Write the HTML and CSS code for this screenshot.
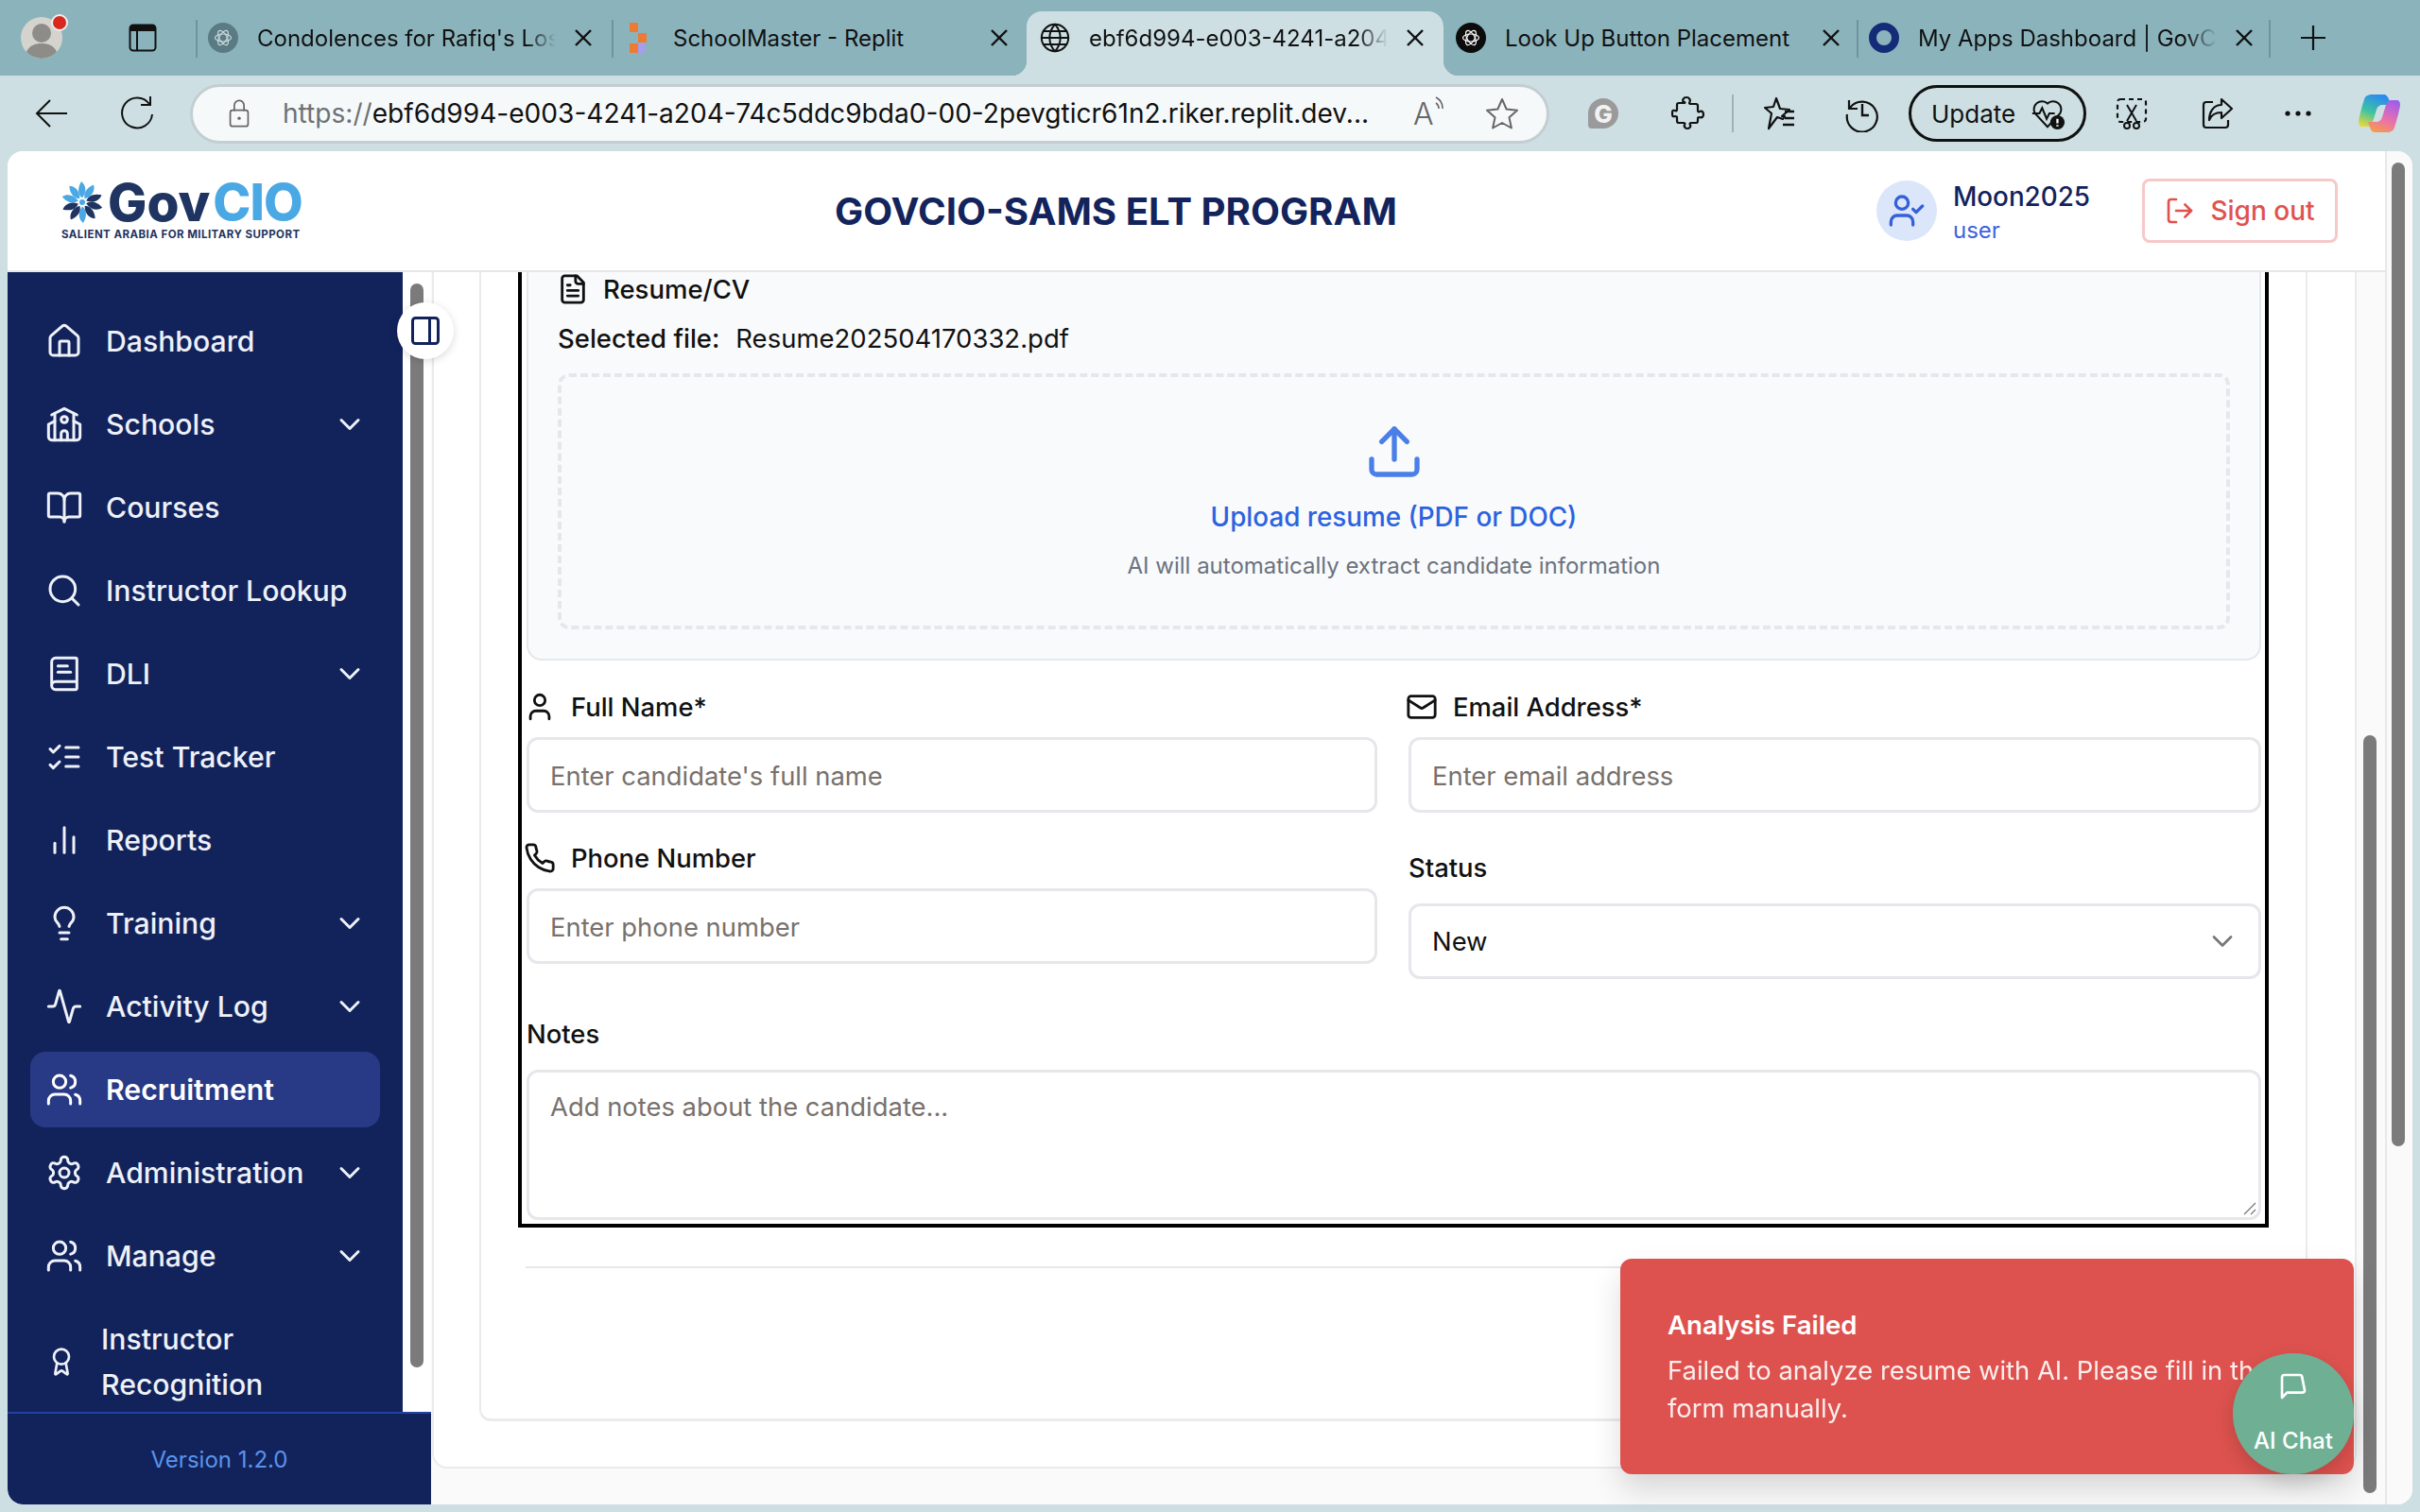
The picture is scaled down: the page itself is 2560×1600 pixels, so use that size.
FILE: index.html
```html
<!DOCTYPE html>
<html lang="en">
<head>
<meta charset="UTF-8" />
<title>GovCIO-SAMS ELT Program</title>
<link rel="stylesheet" href="styles.css">
</head>
<body>

<svg class="sprite" xmlns="http://www.w3.org/2000/svg">
  <symbol id="i-home" viewBox="0 0 24 24"><path d="M15 21v-8a1 1 0 0 0-1-1h-4a1 1 0 0 0-1 1v8"/><path d="M3 10a2 2 0 0 1 .709-1.528l7-5.999a2 2 0 0 1 2.582 0l7 5.999A2 2 0 0 1 21 10v9a2 2 0 0 1-2 2H5a2 2 0 0 1-2-2z"/></symbol>
  <symbol id="i-school" viewBox="0 0 24 24"><path d="M14 22v-4a2 2 0 1 0-4 0v4"/><path d="m18 10 4 2v8a2 2 0 0 1-2 2H4a2 2 0 0 1-2-2v-8l4-2"/><path d="M18 5v17"/><path d="m4 6 8-4 8 4"/><path d="M6 5v17"/><circle cx="12" cy="9" r="2"/></symbol>
  <symbol id="i-book-open" viewBox="0 0 24 24"><path d="M12 7v14"/><path d="M3 18a1 1 0 0 1-1-1V4a1 1 0 0 1 1-1h5a4 4 0 0 1 4 4 4 4 0 0 1 4-4h5a1 1 0 0 1 1 1v13a1 1 0 0 1-1 1h-6a3 3 0 0 0-3 3 3 3 0 0 0-3-3z"/></symbol>
  <symbol id="i-search" viewBox="0 0 24 24"><circle cx="11" cy="11" r="8"/><path d="m21 21-4.3-4.3"/></symbol>
  <symbol id="i-book" viewBox="0 0 24 24"><path d="M4 19.5v-15A2.5 2.5 0 0 1 6.5 2H19a1 1 0 0 1 1 1v18a1 1 0 0 1-1 1H6.5a1 1 0 0 1 0-5H20"/><path d="M8 11h8"/><path d="M8 7h6"/></symbol>
  <symbol id="i-checks" viewBox="0 0 24 24"><path d="m3 17 2 2 4-4"/><path d="m3 7 2 2 4-4"/><path d="M13 6h8"/><path d="M13 12h8"/><path d="M13 18h8"/></symbol>
  <symbol id="i-bars" viewBox="0 0 24 24"><path d="M18 20V10"/><path d="M12 20V4"/><path d="M6 20v-6"/></symbol>
  <symbol id="i-bulb" viewBox="0 0 24 24"><path d="M15 14c.2-1 .7-1.7 1.5-2.5 1-.9 1.5-2.2 1.5-3.5A6 6 0 0 0 6 8c0 1 .2 2.2 1.5 3.5.7.7 1.3 1.5 1.5 2.5"/><path d="M9 18h6"/><path d="M10 22h4"/></symbol>
  <symbol id="i-activity" viewBox="0 0 24 24"><path d="M22 12h-2.48a2 2 0 0 0-1.93 1.46l-2.35 8.36a.25.25 0 0 1-.48 0L9.24 2.18a.25.25 0 0 0-.48 0l-2.35 8.36A2 2 0 0 1 4.49 12H2"/></symbol>
  <symbol id="i-users" viewBox="0 0 24 24"><path d="M16 21v-2a4 4 0 0 0-4-4H6a4 4 0 0 0-4 4v2"/><circle cx="9" cy="7" r="4"/><path d="M22 21v-2a4 4 0 0 0-3-3.87"/><path d="M16 3.13a4 4 0 0 1 0 7.75"/></symbol>
  <symbol id="i-settings" viewBox="0 0 24 24"><path d="M12.22 2h-.44a2 2 0 0 0-2 2v.18a2 2 0 0 1-1 1.73l-.43.25a2 2 0 0 1-2 0l-.15-.08a2 2 0 0 0-2.73.73l-.22.38a2 2 0 0 0 .73 2.73l.15.1a2 2 0 0 1 1 1.72v.51a2 2 0 0 1-1 1.74l-.15.09a2 2 0 0 0-.73 2.73l.22.38a2 2 0 0 0 2.73.73l.15-.08a2 2 0 0 1 2 0l.43.25a2 2 0 0 1 1 1.73V20a2 2 0 0 0 2 2h.44a2 2 0 0 0 2-2v-.18a2 2 0 0 1 1-1.73l.43-.25a2 2 0 0 1 2 0l.15.08a2 2 0 0 0 2.73-.73l.22-.39a2 2 0 0 0-.73-2.73l-.15-.08a2 2 0 0 1-1-1.74v-.5a2 2 0 0 1 1-1.74l.15-.09a2 2 0 0 0 .73-2.73l-.22-.38a2 2 0 0 0-2.73-.73l-.15.08a2 2 0 0 1-2 0l-.43-.25a2 2 0 0 1-1-1.73V4a2 2 0 0 0-2-2z"/><circle cx="12" cy="12" r="3"/></symbol>
  <symbol id="i-award" viewBox="0 0 24 24"><path d="m15.477 12.89 1.515 8.526a.5.5 0 0 1-.81.47l-3.58-2.687a1 1 0 0 0-1.197 0l-3.586 2.686a.5.5 0 0 1-.81-.469l1.514-8.526"/><circle cx="12" cy="8" r="6"/></symbol>
  <symbol id="i-chevron" viewBox="0 0 24 24"><path d="m6 9 6 6 6-6"/></symbol>
  <symbol id="i-file" viewBox="0 0 24 24"><path d="M15 2H6a2 2 0 0 0-2 2v16a2 2 0 0 0 2 2h12a2 2 0 0 0 2-2V7Z"/><path d="M14 2v4a2 2 0 0 0 2 2h4"/><path d="M10 9H8"/><path d="M16 13H8"/><path d="M16 17H8"/></symbol>
  <symbol id="i-upload" viewBox="0 0 24 24"><path d="M21 15v4a2 2 0 0 1-2 2H5a2 2 0 0 1-2-2v-4"/><path d="M17 8l-5-5-5 5"/><path d="M12 3v12"/></symbol>
  <symbol id="i-user" viewBox="0 0 24 24"><path d="M19 21v-2a4 4 0 0 0-4-4H9a4 4 0 0 0-4 4v2"/><circle cx="12" cy="7" r="4"/></symbol>
  <symbol id="i-mail" viewBox="0 0 24 24"><rect x="2" y="4" width="20" height="16" rx="2"/><path d="m22 7-8.97 5.7a1.94 1.94 0 0 1-2.06 0L2 7"/></symbol>
  <symbol id="i-phone" viewBox="0 0 24 24"><path d="M22 16.92v3a2 2 0 0 1-2.18 2 19.79 19.79 0 0 1-8.63-3.07 19.5 19.5 0 0 1-6-6 19.79 19.79 0 0 1-3.07-8.67A2 2 0 0 1 4.11 2h3a2 2 0 0 1 2 1.72 12.84 12.84 0 0 0 .7 2.81 2 2 0 0 1-.45 2.11L8.09 9.91a16 16 0 0 0 6 6l1.27-1.27a2 2 0 0 1 2.11-.45 12.84 12.84 0 0 0 2.81.7A2 2 0 0 1 22 16.92z"/></symbol>
  <symbol id="i-user-check" viewBox="0 0 24 24"><path d="M16 21v-2a4 4 0 0 0-4-4H6a4 4 0 0 0-4 4v2"/><circle cx="9" cy="7" r="4"/><path d="M16 11l2 2 4-4"/></symbol>
  <symbol id="i-logout" viewBox="0 0 24 24"><path d="M9 21H5a2 2 0 0 1-2-2V5a2 2 0 0 1 2-2h4"/><path d="M16 17l5-5-5-5"/><path d="M21 12H9"/></symbol>
  <symbol id="i-message" viewBox="0 0 24 24"><path d="M21 15a2 2 0 0 1-2 2H7l-4 4V5a2 2 0 0 1 2-2h12a2 2 0 0 1 2 2z"/></symbol>
  <symbol id="i-panel" viewBox="0 0 24 24"><rect x="3" y="3" width="18" height="18" rx="2"/><path d="M15 3v18"/></symbol>
  <symbol id="i-globe" viewBox="0 0 24 24"><circle cx="12" cy="12" r="10"/><path d="M12 2a14.5 14.5 0 0 0 0 20 14.5 14.5 0 0 0 0-20"/><path d="M2 12h20"/><path d="M3.5 7h17"/><path d="M3.5 17h17"/></symbol>
  <symbol id="i-close" viewBox="0 0 24 24"><path d="M4 4l16 16"/><path d="M20 4L4 20"/></symbol>
  <symbol id="i-knot" viewBox="0 0 24 24"><ellipse cx="12" cy="12" rx="8.500" ry="4"/><ellipse cx="12" cy="12" rx="8.500" ry="4" transform="rotate(60 12 12)"/><ellipse cx="12" cy="12" rx="8.500" ry="4" transform="rotate(120 12 12)"/></symbol>
  <symbol id="i-blade" viewBox="0 0 44 44"><path d="M22 17.500c-4-3-6-9-1-17.500 5 4 6 11 1 17.500z"/></symbol>
</svg>

<div class="tabstrip">
  <div class="avatar">
    <svg viewBox="0 0 44 44" class="avatar-img"><circle cx="22" cy="22" r="22" fill="#d5d3ce"/><circle cx="22" cy="17" r="10" fill="#8e8c88"/><path d="M6 37c3-7 9-9 16-9s13 2 16 9a22 22 0 0 1-32 0z" fill="#8e8c88"/></svg>
    <span class="avatar-dot"></span>
  </div>
  <svg class="tabs-btn" viewBox="0 0 30 30"><rect x="1.500" y="1.500" width="27" height="27" rx="3.500" fill="none" stroke="#111" stroke-width="2"/><path d="M3 2h24a2 2 0 0 1 1 2v4H2V4a2 2 0 0 1 1-2z" fill="#111"/><path d="M9 8v20" stroke="#111" stroke-width="2"/></svg>
  <div class="tabs">
    <div class="tab sep">
      <span class="fav fav-gpt"><svg class="ic thin"><use href="#i-knot"/></svg></span>
      <span class="tab-title fade">Condolences for Rafiq's Loss</span>
      <svg class="ic tab-close"><use href="#i-close"/></svg>
    </div>
    <div class="tab sep">
      <span class="fav"><svg viewBox="0 0 20 32" class="fav-replit"><rect x="0" y="0" width="9" height="10" fill="#ee7b35"/><rect x="9" y="11" width="9" height="10" fill="#ee7b35"/><rect x="0" y="22" width="9" height="10" fill="#ee7b35"/><rect x="9" y="22" width="7" height="10" fill="#a99cf0"/></svg></span>
      <span class="tab-title">SchoolMaster - Replit</span>
      <svg class="ic tab-close"><use href="#i-close"/></svg>
    </div>
    <div class="tab active">
      <span class="fav"><svg class="ic fav-globe"><use href="#i-globe"/></svg></span>
      <span class="tab-title fade">ebf6d994-e003-4241-a204-74c5ddc9bda0</span>
      <svg class="ic tab-close"><use href="#i-close"/></svg>
    </div>
    <div class="tab">
      <span class="fav fav-dark"><svg class="ic thin"><use href="#i-knot"/></svg></span>
      <span class="tab-title">Look Up Button Placement</span>
      <svg class="ic tab-close"><use href="#i-close"/></svg>
    </div>
    <div class="tab sep sep-end">
      <span class="fav fav-ring"></span>
      <span class="tab-title fade">My Apps Dashboard | GovCIO</span>
      <svg class="ic tab-close"><use href="#i-close"/></svg>
    </div>
  </div>
  <svg class="new-tab" viewBox="0 0 28 28"><path d="M14 1v26M1 14h26" stroke="#111" stroke-width="2.200"/></svg>
</div>

<div class="toolbar">
  <svg class="tool tool-back" viewBox="0 0 40 40"><path d="M36 20H5M18 6L4 20l14 14" fill="none" stroke="#111" stroke-width="2"/></svg>
  <svg class="tool tool-reload" viewBox="0 0 40 40"><path d="M34 10a16 16 0 1 0 3 11M35 2v9h-10" fill="none" stroke="#111" stroke-width="2"/></svg>
  <div class="addressbar">
    <svg class="lock" viewBox="0 0 28 36"><path d="M8 15V8a6 6 0 0 1 12 0v7" fill="none" stroke="#666" stroke-width="2"/><rect x="3" y="14" width="22" height="20" rx="3" fill="none" stroke="#666" stroke-width="2"/><circle cx="14" cy="24" r="2" fill="#666"/></svg>
    <span class="url"><span class="url-scheme">https://</span>ebf6d994-e003-4241-a204-74c5ddc9bda0-00-2pevgticr61n2.riker.replit.dev...</span>
    <span class="read-aloud">A<svg viewBox="0 0 12 20" class="read-waves"><path d="M2 8a7 7 0 0 1 3 6M2 2a13 13 0 0 1 7 12" fill="none" stroke="#666" stroke-width="1.600"/></svg></span>
    <svg class="tool tool-star" viewBox="0 0 40 40"><path d="M20 5l4.600 10.500 11.400 1.200-8.500 7.600 2.400 11.200L20 30l-9.900 5.500 2.400-11.200L4 16.700l11.400-1.200z" fill="none" stroke="#666" stroke-width="2" stroke-linejoin="round"/></svg>
  </div>
  <span class="tool-g">G</span>
  <svg class="tool tool-puzzle" viewBox="0 0 40 40"><path d="M17 9c-2-3 0-6 3-6s5 3 3 6c0 1 1 1 2 1h5c1 0 2 1 2 2v5c0 1 1 2 2 1 3-1 4 1 4 3s-1 4-4 3c-1 0-2 0-2 1v3c0 1-1 2-2 2h-5c-1 0-2 1-1 2 1 2-1 4-3 4s-4-2-3-4c1-1 0-2-1-2h-5c-1 0-2-1-2-2v-4c0-1-1-1-2-1-3 1-3-1-3-3s0-4 3-3c1 1 2 0 2-1v-5c0-1 1-2 2-2h5c1 0 2 0 1-1z" fill="none" stroke="#111" stroke-width="2.200" stroke-linejoin="round"/></svg>
  <span class="tool-sep"></span>
  <svg class="tool tool-fav" viewBox="0 0 40 40"><path d="M17 4l4 11 10 1-8 7 3 0-2 3-6-2-9 12 3-16-7-6 9-1z" fill="none" stroke="#111" stroke-width="2.200" stroke-linejoin="round"/><path d="M26 18h10M26 25h10M24 32h12" stroke="#111" stroke-width="2.400"/></svg>
  <svg class="tool tool-history" viewBox="0 0 40 40"><path d="M6 6v9h9M7 14a16 16 0 1 1-3 7" fill="none" stroke="#111" stroke-width="2.200"/><path d="M20 10v12h7" fill="none" stroke="#111" stroke-width="2.400"/></svg>
  <div class="update-pill">
    <span>Update</span>
    <svg class="update-heart" viewBox="0 0 40 40"><path d="M20 35L6 20a9 9 0 0 1 14-11 9 9 0 0 1 14 11z" fill="none" stroke="#111" stroke-width="2.200"/><path d="M3 20h8l3-6 5 12 3-6h6" fill="none" stroke="#111" stroke-width="2.200"/><circle cx="31" cy="30" r="8" fill="#111"/><path d="M31 26v5M31 33v1.500" stroke="#fff" stroke-width="2.400"/></svg>
  </div>
  <svg class="tool tool-shot" viewBox="0 0 40 40"><rect x="5" y="5" width="30" height="24" rx="3" fill="none" stroke="#111" stroke-width="2.200" stroke-dasharray="5 4"/><path d="M15 11l10 17M25 11L15 28" stroke="#111" stroke-width="2"/><circle cx="15" cy="33" r="3" fill="none" stroke="#111" stroke-width="2"/><circle cx="25" cy="33" r="3" fill="none" stroke="#111" stroke-width="2"/></svg>
  <svg class="tool tool-share" viewBox="0 0 40 40"><path d="M16 8H9a3 3 0 0 0-3 3v21a3 3 0 0 0 3 3h20a3 3 0 0 0 3-3v-5" fill="none" stroke="#111" stroke-width="2.200"/><path d="M25 5l11 10-11 10v-6c-7 0-11 3-13 8 0-9 5-16 13-16z" fill="none" stroke="#111" stroke-width="2.200" stroke-linejoin="round"/></svg>
  <svg class="tool tool-dots" viewBox="0 0 40 40"><circle cx="9" cy="20" r="2.600" fill="#111"/><circle cx="20" cy="20" r="2.600" fill="#111"/><circle cx="31" cy="20" r="2.600" fill="#111"/></svg>
  <svg class="tool tool-copilot" viewBox="0 0 44 40">
    <defs>
      <linearGradient id="cp-a" x1="0.6" y1="0" x2="0.2" y2="1"><stop offset="0" stop-color="#2a8af0"/><stop offset="0.55" stop-color="#3fc4a0"/><stop offset="1" stop-color="#e6d83c"/></linearGradient>
      <linearGradient id="cp-b" x1="0.7" y1="0" x2="0.3" y2="1"><stop offset="0" stop-color="#a05fe8"/><stop offset="0.55" stop-color="#e86fb0"/><stop offset="1" stop-color="#f59a50"/></linearGradient>
    </defs>
    <path d="M16 0h11c2 0 4 2 5 5l2 6h-8c-4 0-6 2-7 5l-4 13c-1 4-3 5-6 5H4c-3 0-4-2-4-5 0-3 4-18 6-24 2-5 6-5 10-5z" fill="url(#cp-a)"/>
    <path d="M28 40H17c-2 0-4-2-5-5l-2-6h8c4 0 6-2 7-5l4-13c1-4 3-5 6-5h5c3 0 4 2 4 5 0 3-4 18-6 24-2 5-6 5-10 5z" fill="url(#cp-b)"/>
  </svg>
</div>

<div class="window">
  <div class="page">
    <header class="app-header">
      <div class="logo">
        <div class="logo-mark">
          <svg class="pinwheel" viewBox="0 0 44 44">
            <circle cx="22" cy="22" r="3" fill="#4aa8e4"/>
            <g fill="#4aa8e4">
              <use href="#i-blade" width="44" height="44"/>
              <use href="#i-blade" width="44" height="44" transform="rotate(36 22 22)"/>
              <use href="#i-blade" width="44" height="44" transform="rotate(288 22 22)"/>
              <use href="#i-blade" width="44" height="44" transform="rotate(324 22 22)"/>
              <use href="#i-blade" width="44" height="44" transform="rotate(180 22 22)"/>
            </g>
            <g fill="#1f3461">
              <use href="#i-blade" width="44" height="44" transform="rotate(72 22 22)"/>
              <use href="#i-blade" width="44" height="44" transform="rotate(108 22 22)"/>
              <use href="#i-blade" width="44" height="44" transform="rotate(144 22 22)"/>
              <use href="#i-blade" width="44" height="44" transform="rotate(216 22 22)"/>
              <use href="#i-blade" width="44" height="44" transform="rotate(252 22 22)"/>
            </g>
          </svg>
          <span class="logo-gov">Gov</span><span class="logo-cio">CIO</span>
        </div>
        <div class="logo-tag">SALIENT ARABIA FOR MILITARY SUPPORT</div>
      </div>
      <h1 class="app-title">GOVCIO-SAMS ELT PROGRAM</h1>
      <div class="user-box">
        <span class="user-avatar"><svg class="ic"><use href="#i-user-check"/></svg></span>
        <div class="user-text">
          <div class="user-name">Moon2025</div>
          <div class="user-role">user</div>
        </div>
      </div>
      <button class="signout"><svg class="ic"><use href="#i-logout"/></svg>Sign out</button>
    </header>

    <div class="app-body">
      <aside class="sidebar">
        <div class="side-top">
          <nav class="nav">
            <a class="nav-item"><svg class="ic"><use href="#i-home"/></svg><span>Dashboard</span></a>
            <a class="nav-item"><svg class="ic"><use href="#i-school"/></svg><span>Schools</span><svg class="ic chev"><use href="#i-chevron"/></svg></a>
            <a class="nav-item"><svg class="ic"><use href="#i-book-open"/></svg><span>Courses</span></a>
            <a class="nav-item"><svg class="ic"><use href="#i-search"/></svg><span>Instructor Lookup</span></a>
            <a class="nav-item"><svg class="ic"><use href="#i-book"/></svg><span>DLI</span><svg class="ic chev"><use href="#i-chevron"/></svg></a>
            <a class="nav-item"><svg class="ic"><use href="#i-checks"/></svg><span>Test Tracker</span></a>
            <a class="nav-item"><svg class="ic"><use href="#i-bars"/></svg><span>Reports</span></a>
            <a class="nav-item"><svg class="ic"><use href="#i-bulb"/></svg><span>Training</span><svg class="ic chev"><use href="#i-chevron"/></svg></a>
            <a class="nav-item"><svg class="ic"><use href="#i-activity"/></svg><span>Activity Log</span><svg class="ic chev"><use href="#i-chevron"/></svg></a>
            <a class="nav-item current"><svg class="ic"><use href="#i-users"/></svg><span>Recruitment</span></a>
            <a class="nav-item"><svg class="ic"><use href="#i-settings"/></svg><span>Administration</span><svg class="ic chev"><use href="#i-chevron"/></svg></a>
            <a class="nav-item"><svg class="ic"><use href="#i-users"/></svg><span>Manage</span><svg class="ic chev"><use href="#i-chevron"/></svg></a>
            <a class="nav-item nav-wrap"><svg class="ic"><use href="#i-award"/></svg><span>Instructor<br>Recognition</span></a>
          </nav>
          <div class="side-gutter"><div class="side-thumb"></div></div>
          <button class="collapse-btn"><svg class="ic"><use href="#i-panel"/></svg></button>
        </div>
        <div class="side-footer">Version 1.2.0</div>
      </aside>

      <main class="main">
        <div class="outer-card">
          <div class="inner-card">
            <form class="form-box">
              <section class="resume">
                <div class="resume-title"><svg class="ic"><use href="#i-file"/></svg>Resume/CV</div>
                <div class="selected">Selected file:<span>Resume202504170332.pdf</span></div>
                <div class="dropzone">
                  <svg class="ic drop-icon"><use href="#i-upload"/></svg>
                  <div class="drop-text">Upload resume (PDF or DOC)</div>
                  <div class="drop-sub">AI will automatically extract candidate information</div>
                </div>
              </section>

              <div class="form-grid">
                <div class="field">
                  <label class="flabel"><svg class="ic"><use href="#i-user"/></svg>Full Name*</label>
                  <input class="finput" type="text" placeholder="Enter candidate's full name">
                </div>
                <div class="field">
                  <label class="flabel"><svg class="ic"><use href="#i-mail"/></svg>Email Address*</label>
                  <input class="finput" type="text" placeholder="Enter email address">
                </div>
                <div class="field">
                  <label class="flabel"><svg class="ic"><use href="#i-phone"/></svg>Phone Number</label>
                  <input class="finput" type="text" placeholder="Enter phone number">
                </div>
                <div class="field field-status">
                  <label class="flabel">Status</label>
                  <div class="fselect"><span>New</span><svg class="ic"><use href="#i-chevron"/></svg></div>
                </div>
              </div>

              <div class="field field-notes">
                <label class="flabel">Notes</label>
                <div class="notes-wrap">
                  <textarea class="finput ftext" placeholder="Add notes about the candidate..."></textarea>
                  <svg class="grip" viewBox="0 0 14 14"><path d="M13 1L1 13M13 8l-5 5" stroke="#777" stroke-width="1.200"/></svg>
                </div>
              </div>
            </form>
            <div class="card-rule"></div>
          </div>
        </div>
        <div class="main-gutter"><div class="main-thumb"></div></div>
      </main>
    </div>
  </div>
  <div class="page-gutter"><div class="page-thumb"></div></div>
</div>

<div class="toast">
  <div class="toast-title">Analysis Failed</div>
  <div class="toast-body">Failed to analyze resume with AI. Please fill in the form manually.</div>
</div>
<button class="ai-chat"><svg class="ic"><use href="#i-message"/></svg><span>AI Chat</span></button>

</body>
</html>
```

FILE: styles.css
```css
* {
  box-sizing: border-box;
}
html, body {
  margin: 0;
  height: 1600px;
  overflow: hidden;
}
body {
  background: #cddfe3;
  color: #111;
  font-family: Inter, "Noto Sans", sans-serif;
  font-size: 28px;
  position: relative;
}
.sprite {
  position: absolute;
  width: 0;
  height: 0;
}
.ic {
  width: 24px;
  height: 24px;
  fill: none;
  stroke: currentColor;
  stroke-width: 2;
  stroke-linecap: round;
  stroke-linejoin: round;
  flex: none;
}

/* browser tab strip */
.tabstrip {
  height: 80px;
  background: #8bb3bc;
  display: flex;
  align-items: center;
}
.avatar {
  width: 44px;
  height: 44px;
  margin-left: 22px;
  position: relative;
}
.avatar-img {
  width: 44px;
  height: 44px;
  display: block;
}
.avatar-dot {
  position: absolute;
  right: -6px;
  top: -3px;
  width: 18px;
  height: 18px;
  border-radius: 50%;
  background: #d8281e;
  border: 2px solid #eee;
}
.tabs-btn {
  width: 30px;
  height: 30px;
  margin-left: 70px;
}
.tabs {
  margin-left: 41px;
  height: 80px;
  display: grid;
  grid-template-columns: 440px 439px 441px 437px 438px;
}
.tab {
  position: relative;
  display: flex;
  align-items: center;
  padding-left: 13px;
  font-size: 24px;
}
.tab.sep::before {
  content: "";
  position: absolute;
  left: 0;
  top: 21px;
  height: 40px;
  width: 2px;
  background: #6f949c;
}
.tab.sep-end::after {
  content: "";
  position: absolute;
  right: 0;
  top: 21px;
  height: 40px;
  width: 2px;
  background: #6f949c;
}
.tab.active {
  background: #cddfe3;
  margin-top: 12px;
  height: 68px;
  border-radius: 16px 16px 0 0;
  padding-bottom: 12px;
  padding-left: 14px;
}
.tab.active::before,
.tab.active::after {
  content: "";
  position: absolute;
  bottom: 0;
  width: 16px;
  height: 16px;
}
.tab.active::before {
  left: -16px;
  background: radial-gradient(circle at 0 0, transparent 16px, #cddfe3 16.500px);
}
.tab.active::after {
  right: -16px;
  background: radial-gradient(circle at 100% 0, transparent 16px, #cddfe3 16.500px);
}
.fav {
  width: 32px;
  height: 32px;
  flex: none;
  display: flex;
  align-items: center;
  justify-content: center;
}
.fav-gpt {
  background: #5a7b84;
  border-radius: 50%;
  color: #c9dade;
}
.fav-dark {
  background: #0c0c0c;
  border-radius: 50%;
  color: #fff;
}
.fav-ring {
  border-radius: 50%;
  border: 8px solid #142c78;
  background: #8bb3bc;
}
.thin {
  stroke-width: 1.200;
}
.fav-replit {
  width: 20px;
  height: 32px;
}
.fav-globe {
  width: 34px;
  height: 34px;
  stroke-width: 1.400;
}
.tab-title {
  width: 316px;
  margin-left: 20px;
  white-space: nowrap;
  overflow: hidden;
}
.tab-title.fade {
  -webkit-mask-image: linear-gradient(to right, #000 90%, transparent 100%);
  mask-image: linear-gradient(to right, #000 90%, transparent 100%);
}
.tab-close {
  width: 24px;
  height: 24px;
  margin-left: 17px;
  stroke-width: 2.400;
  stroke-linecap: butt;
}
.new-tab {
  width: 28px;
  height: 28px;
  margin-left: 31px;
}

/* browser toolbar */
.toolbar {
  height: 80px;
  display: flex;
  align-items: center;
  padding-left: 35px;
}
.tool {
  width: 40px;
  height: 40px;
  flex: none;
}
.tool-reload { margin-left: 49px; }
.addressbar {
  margin-left: 37px;
  width: 1438px;
  height: 63px;
  border-radius: 32px;
  background: #f6f9fa;
  border: 3px solid #c3ced2;
  display: flex;
  align-items: center;
  padding-left: 37px;
  flex: none;
}
.lock {
  width: 24px;
  height: 32px;
  flex: none;
}
.url {
  margin-left: 34px;
  width: 1158px;
  font-size: 28.100px;
  white-space: nowrap;
  overflow: hidden;
}
.url-scheme {
  color: #6d7174;
}
.read-aloud {
  margin-left: 38px;
  width: 36px;
  color: #666;
  font-size: 32px;
  font-weight: 300;
  display: flex;
  align-items: flex-start;
}
.read-waves {
  width: 12px;
  height: 20px;
}
.tool-star {
  margin-left: 38px;
}
.tool-g {
  margin-left: 41px;
  width: 32px;
  height: 32px;
  flex: none;
  border-radius: 50% 50% 50% 4px;
  background: #9a9a9a;
  color: #f2f2f2;
  font-weight: 800;
  font-size: 26px;
  display: flex;
  align-items: center;
  justify-content: center;
}
.tool-puzzle { margin-left: 52px; }
.tool-sep {
  width: 2px;
  height: 40px;
  margin-left: 28px;
  background: #a3b1b5;
}
.tool-fav { margin-left: 28px; }
.tool-history { margin-left: 48px; }
.update-pill {
  margin-left: 29px;
  width: 188px;
  height: 60px;
  border: 3px solid #111;
  border-radius: 30px;
  display: flex;
  align-items: center;
  padding-left: 21px;
  font-size: 26px;
  font-weight: 400;
}
.update-heart {
  width: 38px;
  height: 38px;
  margin-left: 15px;
}
.tool-shot { margin-left: 28px; }
.tool-share { margin-left: 50px; }
.tool-dots { margin-left: 46px; }
.tool-copilot {
  margin-left: 44px;
  width: 44px;
  height: 40px;
}

/* window body */
.window {
  margin: 0 8px;
  height: 1432px;
  display: flex;
  background: #fff;
  border-radius: 16px;
  overflow: hidden;
}
.page {
  flex: 1;
  min-width: 0;
  display: flex;
  flex-direction: column;
}
.page-gutter {
  width: 29px;
  background: #fafafa;
  border-left: 2px solid #e8e8e8;
  padding: 12px 0 0 5px;
}
.page-thumb {
  width: 14px;
  height: 1041px;
  border-radius: 7px;
  background: #7b7b7b;
}

/* app header */
.app-header {
  height: 128px;
  flex: none;
  display: flex;
  align-items: center;
  padding-left: 57px;
  background: #fff;
  border-bottom: 2px solid #e6e6e6;
  position: relative;
  z-index: 1;
}
.logo {
  width: 253px;
}
.logo-mark {
  display: flex;
  align-items: center;
  height: 44px;
  font-size: 55px;
  font-weight: 800;
  line-height: 44px;
}
.pinwheel {
  width: 44px;
  height: 44px;
  margin-right: 5px;
  flex: none;
}
.logo-gov { color: #1f3461; margin-right: 3px; }
.logo-cio { color: #4aa8e4; font-size: 54px; letter-spacing: -1px; }
.logo-tag {
  margin-top: 5px;
  font-size: 11.500px;
  font-weight: 700;
  color: #1f3461;
  white-space: nowrap;
  letter-spacing: 0.45px;
}
.app-title {
  margin: 0 0 0 565px;
  font-size: 40.200px;
  font-weight: 700;
  color: #13235c;
  white-space: nowrap;
}
.user-box {
  margin-left: auto;
  display: flex;
  align-items: center;
  gap: 17px;
}
.user-avatar {
  width: 64px;
  height: 64px;
  border-radius: 50%;
  background: #dce6fb;
  color: #3560d8;
  display: flex;
  align-items: center;
  justify-content: center;
}
.user-avatar .ic {
  width: 40px;
  height: 40px;
}
.user-name {
  font-size: 27.800px;
  font-weight: 500;
  color: #13235c;
  line-height: 36px;
  margin-top: 3px;
}
.user-role {
  font-size: 24px;
  color: #3d63dd;
  line-height: 32px;
  margin-top: 2px;
}
.signout {
  margin: 0 50px 0 55px;
  width: 207px;
  height: 68px;
  border: 3px solid #f6c9c9;
  border-radius: 8px;
  background: #fff;
  color: #e0524e;
  font-family: inherit;
  font-size: 28px;
  font-weight: 500;
  display: flex;
  align-items: center;
  justify-content: center;
  gap: 16px;
  white-space: nowrap;
}
.signout .ic {
  width: 32px;
  height: 32px;
}

.app-body {
  flex: 1;
  min-height: 0;
  display: flex;
}

/* sidebar */
.sidebar {
  width: 448px;
  flex: none;
  display: flex;
  flex-direction: column;
  position: relative;
  z-index: 2;
}
.side-top {
  flex: 1;
  min-height: 0;
  display: flex;
  position: relative;
}
.nav {
  width: 418px;
  background: #12235c;
  padding: 33px 24px 0;
  display: flex;
  flex-direction: column;
  gap: 8px;
  overflow: hidden;
}
.nav-item {
  height: 80px;
  flex: none;
  display: flex;
  align-items: center;
  border-radius: 16px;
  padding: 0 14px 0 16px;
  color: #eef1f8;
  font-size: 30.200px;
  font-weight: 500;
  white-space: nowrap;
}
.nav-item span {
  margin-bottom: 1px;
}
.nav-item .ic {
  width: 40px;
  height: 40px;
  margin-right: 24px;
  stroke-width: 1.800;
}
.nav-item .chev {
  width: 36px;
  height: 36px;
  margin: 0 0 0 auto;
  stroke-width: 2;
}
.nav-item.current {
  background: #283a85;
  color: #fff;
  font-weight: 600;
}
.nav-wrap {
  height: 96px;
  margin-top: 16px;
  padding-left: 17px;
  line-height: 48px;
}
.nav-wrap .ic {
  width: 32px;
  height: 32px;
  margin-right: 26px;
  stroke-width: 2;
}
.side-gutter {
  width: 30px;
  background: #fff;
  padding: 12px 0 0 8px;
}
.side-thumb {
  width: 14px;
  height: 1147px;
  border-radius: 7px;
  background: #7b7b7b;
}
.collapse-btn {
  position: absolute;
  left: 412px;
  top: 32px;
  width: 60px;
  height: 60px;
  border: none;
  border-radius: 50%;
  background: #fff;
  color: #12235c;
  box-shadow: 0 2px 8px rgba(0,0,0,0.15);
  display: flex;
  align-items: center;
  justify-content: center;
  padding: 0;
}
.collapse-btn .ic {
  width: 36px;
  height: 36px;
}
.side-footer {
  height: 98px;
  flex: none;
  background: #12235c;
  border-top: 2px solid #2343a3;
  border-bottom-left-radius: 16px;
  color: #5b93ea;
  font-size: 24px;
  display: flex;
  align-items: center;
  justify-content: center;
}

/* main area */
.main {
  flex: 1;
  min-width: 0;
  display: flex;
  background: #fafafa;
}
.outer-card {
  flex: 1;
  min-width: 0;
  height: 1266px;
  margin-left: 1px;
  background: #fff;
  border: solid #ebebeb;
  border-width: 0 2px 2px;
  border-radius: 0 0 16px 16px;
  padding: 0 50px 0 48px;
}
.inner-card {
  height: 1216px;
  background: #fff;
  border: solid #ebebeb;
  border-width: 0 2px 3px;
  border-radius: 0 0 12px 12px;
  padding: 0 39px;
}
.main-gutter {
  width: 30px;
  flex: none;
  padding-left: 7px;
}
.main-thumb {
  width: 14px;
  height: 802px;
  margin-top: 490px;
  border-radius: 7px;
  background: #7b7b7b;
}

/* form */
.form-box {
  border: solid #000;
  border-width: 0 4px 4px;
  padding: 0 4px 4px 5px;
  height: 1011px;
}
.resume {
  height: 411px;
  background: #f9fafb;
  border: solid #e5e7eb;
  border-width: 0 2px 2px;
  border-radius: 0 0 16px 16px;
  padding: 0 31px;
}
.resume-title {
  height: 36px;
  display: flex;
  align-items: center;
  gap: 15px;
  font-size: 27.500px;
  font-weight: 500;
}
.resume-title .ic {
  width: 34px;
  height: 34px;
  margin-left: -1px;
}
.selected {
  margin-top: 16px;
  height: 36px;
  display: flex;
  align-items: center;
  font-size: 27.500px;
  font-weight: 500;
}
.selected span {
  margin-left: 17px;
  font-weight: 400;
}
.dropzone {
  margin-top: 19px;
  height: 271px;
  border: 4px dashed #e5e7eb;
  border-radius: 12px;
  display: flex;
  flex-direction: column;
  align-items: center;
}
.drop-icon {
  width: 64px;
  height: 64px;
  margin-top: 47px;
  color: #4b7fe8;
}
.drop-text {
  margin-top: 19px;
  color: #2b63e0;
  font-size: 27.800px;
  font-weight: 500;
  line-height: 36px;
}
.drop-sub {
  margin-top: 18px;
  color: #6b7280;
  font-size: 24px;
  line-height: 32px;
}
.form-grid {
  margin-top: 31px;
  display: grid;
  grid-template-columns: 900px 902px;
  column-gap: 33px;
  row-gap: 30px;
}
.flabel {
  height: 36px;
  display: flex;
  align-items: center;
  gap: 16px;
  font-size: 27.400px;
  font-weight: 500;
  margin-bottom: 14px;
}
.flabel .ic {
  width: 34px;
  height: 34px;
  margin-left: -3px;
}
.finput, .fselect {
  display: flex;
  align-items: center;
  width: 100%;
  height: 80px;
  border: 3px solid #e5e7eb;
  border-radius: 12px;
  padding: 2px 20px 0 22px;
  background: #fff;
  font-family: inherit;
  font-size: 27.400px;
  color: #111;
  outline: none;
}
.finput::placeholder {
  color: #78716c;
  opacity: 1;
}
.field-status {
  padding-top: 10px;
}
.field-status .flabel {
  margin-bottom: 20px;
}
.fselect {
  justify-content: space-between;
  padding-top: 0;
}
.fselect .ic {
  width: 36px;
  height: 36px;
  color: #777;
  stroke-width: 1.800;
}
.field-notes {
  margin-top: 40px;
}
.field-notes .flabel {
  margin-bottom: 20px;
}
.notes-wrap {
  position: relative;
}
.ftext {
  display: block;
  height: 159px;
  padding-top: 18px;
  line-height: 36px;
  resize: none;
}
.grip {
  position: absolute;
  right: 5px;
  bottom: 5px;
  width: 14px;
  height: 14px;
}
.card-rule {
  margin-top: 41px;
  margin-right: 8px;
  margin-left: 8px;
  height: 2px;
  background: #e8e8e8;
}

/* things floating over the page */
.toast {
  position: absolute;
  left: 1714px;
  top: 1332px;
  width: 776px;
  height: 228px;
  background: #dd524e;
  border-radius: 12px;
  padding: 50px 50px 0;
  color: #fff;
  box-shadow: 0 16px 32px rgba(0,0,0,0.14);
}
.toast-title {
  font-size: 27.600px;
  font-weight: 600;
  line-height: 40px;
}
.toast-body {
  margin-top: 8px;
  font-size: 27.400px;
  line-height: 40px;
  opacity: 0.9;
}
.ai-chat {
  position: absolute;
  left: 2362px;
  top: 1432px;
  width: 128px;
  height: 128px;
  border: none;
  border-radius: 50%;
  background: #6fb095;
  color: #fff;
  font-family: inherit;
  font-size: 24px;
  font-weight: 500;
  display: flex;
  flex-direction: column;
  align-items: center;
  padding: 19px 0 0;
  gap: 27px;
  box-shadow: 0 8px 20px rgba(0,0,0,0.16);
}
.ai-chat .ic {
  width: 32px;
  height: 32px;
}
```
